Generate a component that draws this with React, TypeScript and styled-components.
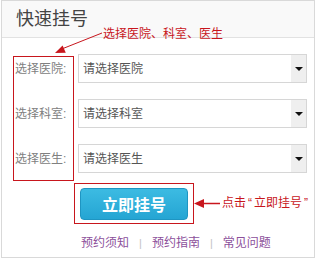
import React from "react";
import styled, { createGlobalStyle } from "styled-components";

const Global = createGlobalStyle`
  html, body { margin: 0; padding: 0; background: #ffffff; }
  body { font-family: "Liberation Sans", "Noto Sans CJK SC", sans-serif; }
  * { box-sizing: border-box; }
`;

const FONT = `"Liberation Sans", "Noto Sans CJK SC", sans-serif`;
const RED = "#c8161d";

const Panel = styled.div`
  position: relative;
  margin-left: 1px;
  width: 314px;
  height: 258px;
  border: 1px solid #d9d9d9;
  background: #ffffff;
`;

const Header = styled.div`
  height: 37px;
  border-bottom: 1px solid #e2e2e2;
  background: #f9f9f9;
  padding-left: 14px;
  display: flex;
  align-items: center;
`;

const Title = styled.h2`
  margin: 0;
  font-family: ${FONT};
  font-size: 18px;
  font-weight: normal;
  line-height: 36px;
  color: #444444;
`;

const Body = styled.div`
  padding: 16px 0 0 11px;
`;

const FormArea = styled.div`
  display: flex;
  align-items: flex-start;
`;

const LabelBox = styled.div`
  margin-top: 2px;
  width: 61px;
  height: 125px;
  border: 1px solid ${RED};
  padding: 0 0 0 1px;
  display: flex;
  flex-direction: column;
  gap: 20px;
`;

const Label = styled.label`
  height: 25px;
  line-height: 25px;
  font-family: ${FONT};
  font-size: 12px;
  color: #808080;
  white-space: nowrap;
`;

const SelectColumn = styled.div`
  margin-left: 4px;
  display: flex;
  flex-direction: column;
  gap: 16px;
`;

const SelectWrap = styled.div`
  position: relative;
  width: 229px;
  height: 29px;
`;

const Select = styled.select`
  appearance: none;
  -webkit-appearance: none;
  width: 100%;
  height: 100%;
  border: 1px solid #d6d6d6;
  border-radius: 0;
  background: #ffffff;
  padding: 0 20px 0 4px;
  font-family: ${FONT};
  font-size: 12px;
  color: #555555;
  outline: none;
`;

const ArrowZone = styled.span`
  position: absolute;
  top: 1px;
  right: 1px;
  bottom: 1px;
  width: 15px;
  background: #efefef;
  pointer-events: none;
  display: flex;
  align-items: center;
  justify-content: center;
  &::after {
    content: "";
    border-left: 4px solid transparent;
    border-right: 4px solid transparent;
    border-top: 4px solid #111111;
  }
`;

const ButtonBox = styled.div`
  margin: 2px 0 0 61px;
  width: 120px;
  border: 1px solid ${RED};
  padding: 4px 5px 3px 5px;
`;

const SubmitButton = styled.button`
  display: block;
  width: 108px;
  height: 32px;
  border: 1px solid #1f95c2;
  border-radius: 4px;
  background: linear-gradient(#3cbbe2, #25a5d3);
  color: #ffffff;
  font-family: ${FONT};
  font-size: 16px;
  font-weight: bold;
  letter-spacing: 0px;
  padding: 0;
  cursor: pointer;
`;

const Links = styled.div`
  margin: 11px 0 0 68px;
  display: flex;
  align-items: center;
  gap: 10px;
  font-family: ${FONT};
  font-size: 12px;
  line-height: 16px;
`;

const LinkItem = styled.a`
  color: #8c4f9b;
  text-decoration: none;
`;

const Sep = styled.span`
  color: #c4c4c4;
  font-size: 11px;
`;

const Overlay = styled.svg`
  position: absolute;
  left: 0;
  top: 0;
  pointer-events: none;
`;

const Note = styled.span<{ $x: number; $y: number }>`
  position: absolute;
  left: ${(p) => p.$x}px;
  top: ${(p) => p.$y}px;
  font-family: ${FONT};
  font-size: 12px;
  line-height: 14px;
  color: ${RED};
  white-space: nowrap;
`;

const Quote = styled.span`
  padding: 0 2px;
`;

const rows = [
  { label: "选择医院:", placeholder: "请选择医院" },
  { label: "选择科室:", placeholder: "请选择科室" },
  { label: "选择医生:", placeholder: "请选择医生" },
];

export default function App() {
  return (
    <>
      <Global />
      <Panel>
        <Header>
          <Title>快速挂号</Title>
        </Header>
        <Body>
          <FormArea>
            <LabelBox>
              {rows.map((r) => (
                <Label key={r.label}>{r.label}</Label>
              ))}
            </LabelBox>
            <SelectColumn>
              {rows.map((r) => (
                <SelectWrap key={r.placeholder}>
                  <Select defaultValue="">
                    <option value="">{r.placeholder}</option>
                  </Select>
                  <ArrowZone />
                </SelectWrap>
              ))}
            </SelectColumn>
          </FormArea>
          <ButtonBox>
            <SubmitButton>立即挂号</SubmitButton>
          </ButtonBox>
          <Links>
            <LinkItem href="#">预约须知</LinkItem>
            <Sep>|</Sep>
            <LinkItem href="#">预约指南</LinkItem>
            <Sep>|</Sep>
            <LinkItem href="#">常见问题</LinkItem>
          </Links>
        </Body>

        <Overlay width="312" height="256" viewBox="2 1 312 256">
          <line x1="102" y1="33" x2="63" y2="48.5" stroke={RED} strokeWidth="1" />
          <polygon points="55,53 65.8,52.8 62.6,45.4" fill={RED} />
          <line x1="202" y1="203.5" x2="220" y2="203.5" stroke={RED} strokeWidth="1.5" />
          <polygon points="194,203.5 204,199 204,208" fill={RED} />
        </Overlay>
        <Note $x={101} $y={26}>选择医院、科室、医生</Note>
        <Note $x={220} $y={195}>
          点击<Quote>“</Quote>立即挂号<Quote>”</Quote>
        </Note>
      </Panel>
    </>
  );
}
